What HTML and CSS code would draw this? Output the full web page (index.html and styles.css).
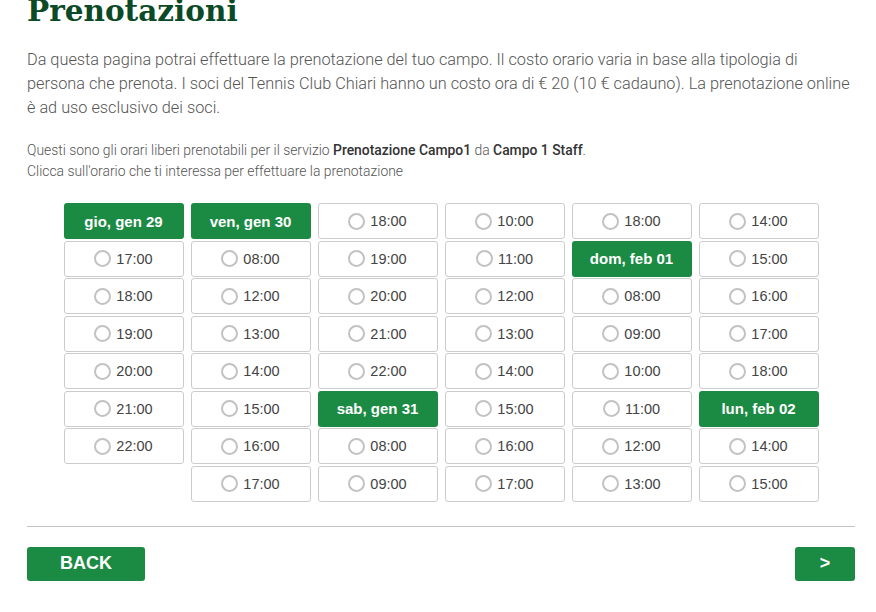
FILE: index.html
```html
<!DOCTYPE html>
<html lang="it">

<head>
    <meta charset="UTF-8">
    <meta name="viewport" content="width=device-width, initial-scale=1.0">
    <title>Prenotazioni</title>
    <link rel="stylesheet" href="styles.css">
</head>

<body>
    <div class="page">
        <h1 class="title">Prenotazioni</h1>

        <p class="intro">
            Da questa pagina potrai effettuare la prenotazione del tuo campo. Il costo orario varia in base alla tipologia di<br>
            persona che prenota. I soci del Tennis Club Chiari hanno un costo ora di € 20 (10 € cadauno). La prenotazione online<br>
            è ad uso esclusivo dei soci.
        </p>

        <p class="info">
            Questi sono gli orari liberi prenotabili per il servizio <b>Prenotazione Campo1</b> da <b>Campo 1 Staff</b>.<br>
            Clicca sull'orario che ti interessa per effettuare la prenotazione
        </p>

        <!-- slots flow top to bottom, column by column -->
        <div class="slots">
            <div class="col">
                <div class="day">gio, gen 29</div>
                <label class="slot"><span class="radio"></span>17:00</label>
                <label class="slot"><span class="radio"></span>18:00</label>
                <label class="slot"><span class="radio"></span>19:00</label>
                <label class="slot"><span class="radio"></span>20:00</label>
                <label class="slot"><span class="radio"></span>21:00</label>
                <label class="slot"><span class="radio"></span>22:00</label>
            </div>
            <div class="col">
                <div class="day">ven, gen 30</div>
                <label class="slot"><span class="radio"></span>08:00</label>
                <label class="slot"><span class="radio"></span>12:00</label>
                <label class="slot"><span class="radio"></span>13:00</label>
                <label class="slot"><span class="radio"></span>14:00</label>
                <label class="slot"><span class="radio"></span>15:00</label>
                <label class="slot"><span class="radio"></span>16:00</label>
                <label class="slot"><span class="radio"></span>17:00</label>
            </div>
            <div class="col">
                <label class="slot"><span class="radio"></span>18:00</label>
                <label class="slot"><span class="radio"></span>19:00</label>
                <label class="slot"><span class="radio"></span>20:00</label>
                <label class="slot"><span class="radio"></span>21:00</label>
                <label class="slot"><span class="radio"></span>22:00</label>
                <div class="day">sab, gen 31</div>
                <label class="slot"><span class="radio"></span>08:00</label>
                <label class="slot"><span class="radio"></span>09:00</label>
            </div>
            <div class="col">
                <label class="slot"><span class="radio"></span>10:00</label>
                <label class="slot"><span class="radio"></span>11:00</label>
                <label class="slot"><span class="radio"></span>12:00</label>
                <label class="slot"><span class="radio"></span>13:00</label>
                <label class="slot"><span class="radio"></span>14:00</label>
                <label class="slot"><span class="radio"></span>15:00</label>
                <label class="slot"><span class="radio"></span>16:00</label>
                <label class="slot"><span class="radio"></span>17:00</label>
            </div>
            <div class="col">
                <label class="slot"><span class="radio"></span>18:00</label>
                <div class="day">dom, feb 01</div>
                <label class="slot"><span class="radio"></span>08:00</label>
                <label class="slot"><span class="radio"></span>09:00</label>
                <label class="slot"><span class="radio"></span>10:00</label>
                <label class="slot"><span class="radio"></span>11:00</label>
                <label class="slot"><span class="radio"></span>12:00</label>
                <label class="slot"><span class="radio"></span>13:00</label>
            </div>
            <div class="col">
                <label class="slot"><span class="radio"></span>14:00</label>
                <label class="slot"><span class="radio"></span>15:00</label>
                <label class="slot"><span class="radio"></span>16:00</label>
                <label class="slot"><span class="radio"></span>17:00</label>
                <label class="slot"><span class="radio"></span>18:00</label>
                <div class="day">lun, feb 02</div>
                <label class="slot"><span class="radio"></span>14:00</label>
                <label class="slot"><span class="radio"></span>15:00</label>
            </div>
        </div>

        <hr class="sep">

        <div class="nav">
            <button class="btn back">BACK</button>
            <button class="btn next">&gt;</button>
        </div>
    </div>
</body>

</html>
```

FILE: styles.css
```css
body {
    margin: 0;
    background-color: #fff;
    font-family: Roboto, "Liberation Sans", sans-serif;
}

.page {
    padding: 0 21px 0 27px;
}

.title {
    margin: -7px 0 0;
    font-family: "DejaVu Serif", serif;
    font-size: 29.5px;
    line-height: 36px;
    font-weight: bold;
    color: #0b4a26;
}

.intro {
    margin: 19px 0 0;
    font-size: 16.3px;
    font-weight: 300;
    line-height: 24px;
    color: #555;
    white-space: nowrap;
}

.info {
    margin: 20px 0 0;
    font-size: 13.9px;
    font-weight: 300;
    line-height: 21px;
    color: #555;
}

.info b {
    font-weight: 500;
    color: #333;
}

.slots {
    display: flex;
    justify-content: center;
    gap: 7px;
    margin-top: 21px;
}

.col {
    display: flex;
    flex-direction: column;
    gap: 1.5px;
    width: 120px;
}

.day,
.slot {
    box-sizing: border-box;
    height: 36px;
    display: flex;
    justify-content: center;
    align-items: center;
    border-radius: 3px;
    font-family: "Liberation Sans", Arial, sans-serif;
}

.day {
    background-color: #1b8a43;
    color: #fff;
    font-size: 15px;
    font-weight: bold;
}

.slot {
    border: 1px solid #ccc;
    color: #444;
    font-size: 14.5px;
    gap: 5px;
    cursor: pointer;
}

.radio {
    box-sizing: border-box;
    width: 17px;
    height: 17px;
    border: 2px solid #c2c2c2;
    border-radius: 50%;
}

.sep {
    margin: 24px 0 0;
    border: 0;
    border-top: 1px solid #c4c4c4;
}

.nav {
    display: flex;
    justify-content: space-between;
    margin-top: 20px;
}

.btn {
    height: 34px;
    border: 0;
    border-radius: 3px;
    background-color: #1b8a43;
    color: #fff;
    font-family: "Liberation Sans", Arial, sans-serif;
    font-size: 18px;
    font-weight: bold;
    cursor: pointer;
}

.back {
    width: 118px;
}

.next {
    width: 60px;
}
```
